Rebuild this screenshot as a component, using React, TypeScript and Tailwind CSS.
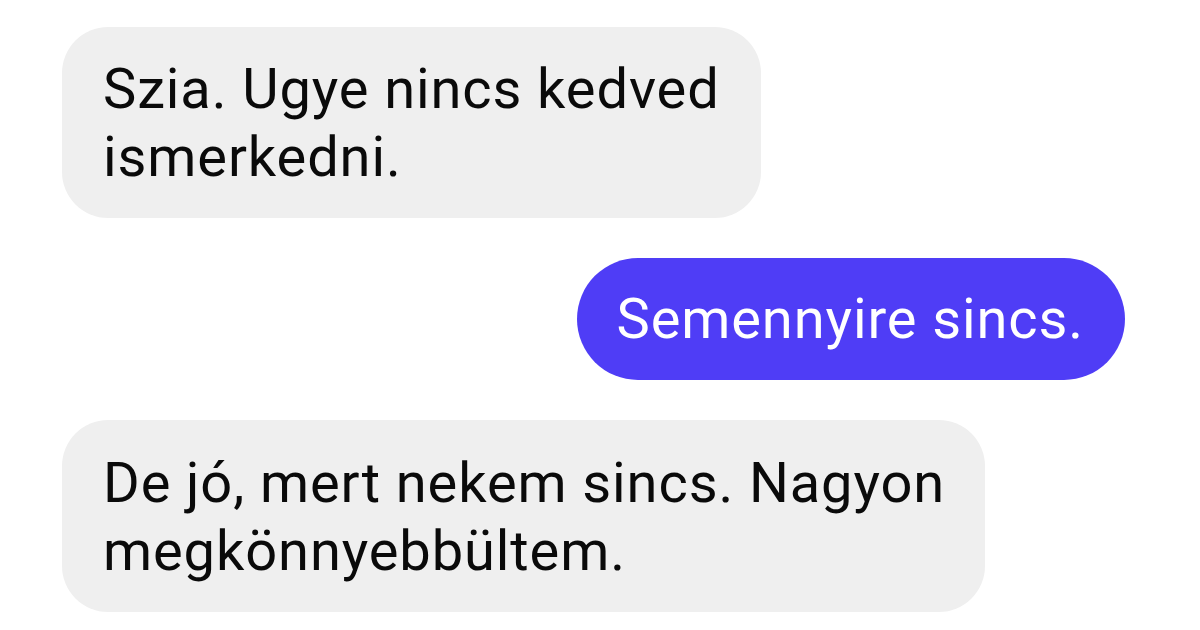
export default function App() {
  return (
    <div className="w-[1200px] h-[630px] bg-white overflow-hidden flex flex-col pt-[27px] pl-[62px] pr-[75px] gap-[40px]" style={{ fontFamily: "Roboto, 'Noto Sans', sans-serif" }}>
      <div className="self-start bg-[#efefef] rounded-[46px] pl-[41px] pr-[41px] pt-[28px] pb-[27px] text-[56px] leading-[68px] tracking-[0.9px] text-[#0a0a0a]">
        Szia. Ugye nincs kedved
        <br />
        ismerkedni.
      </div>
      <div className="self-end bg-[#4f3df6] rounded-full h-[122px] flex items-center pl-[40px] pr-[41px] text-[56px] leading-[68px] tracking-[0.9px] text-white">
        Semennyire sincs.
      </div>
      <div className="self-start bg-[#efefef] rounded-[46px] pl-[41px] pr-[40px] pt-[29px] pb-[27px] text-[56px] leading-[68px] tracking-[0.9px] text-[#0a0a0a]">
        De jó, mert nekem sincs. Nagyon
        <br />
        megkönnyebbültem.
      </div>
    </div>
  );
}
